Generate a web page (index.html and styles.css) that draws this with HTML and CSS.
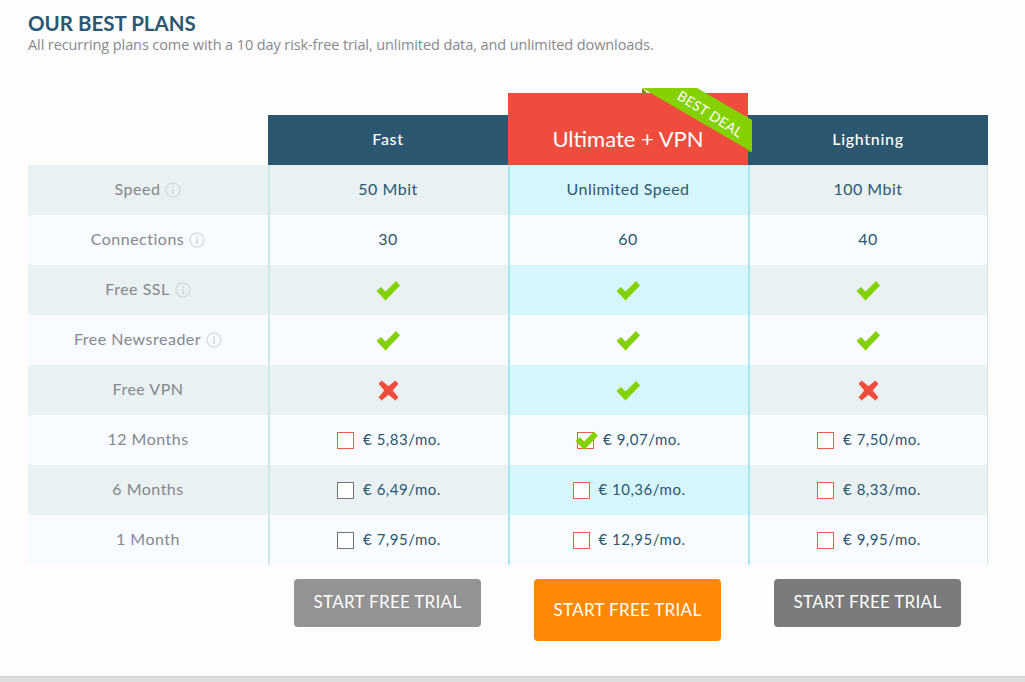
FILE: index.html
```html
<!DOCTYPE html>
<html lang="en">
<head>
<meta charset="utf-8">
<title>Our best plans</title>
<link rel="stylesheet" href="styles.css">
</head>
<body>
<svg class="defs" width="0" height="0" aria-hidden="true">
  <symbol id="check" viewBox="0 0 24 20"><path d="M0.5 10.5 L5 6.5 L9.5 11 L20 0.5 L24 5 L9.5 20 Z" fill="#85d100"/></symbol>
  <symbol id="cross" viewBox="0 0 20 20"><path d="M3.5 0.5 L10 6 L16.5 0.5 L19.5 3.5 L14 10 L19.5 16.5 L16.5 19.5 L10 14 L3.5 19.5 L0.5 16.5 L6 10 L0.5 3.5 Z" fill="#ee4d3d"/></symbol>
  <symbol id="info" viewBox="0 0 16 16"><circle cx="8" cy="8" r="7" fill="none" stroke="#d8dcdc" stroke-width="1.4"/><rect x="7.2" y="7" width="1.6" height="5" fill="#d0d4d4"/><rect x="7.2" y="4.2" width="1.6" height="1.6" fill="#d0d4d4"/></symbol>
</svg>
<main class="page">
  <h1 class="title">OUR BEST PLANS</h1>
  <p class="subtitle">All recurring plans come with a 10 day risk-free trial, unlimited data, and unlimited downloads.</p>
  <div class="plans">
    <div class="head-spacer"></div>
    <div class="head">Fast</div>
    <div class="head head-best">Ultimate + VPN
      <svg class="ribbon" width="112" height="66" viewBox="0 0 112 66" aria-hidden="true">
        <path d="M2 0 L2 5 L7 5 Z" fill="#5f9a00"/>
        <path d="M108 32 L112 32 L112 64 L108 64 Z" fill="#5f9a00"/>
        <path d="M2 0 L57 0 L112 32 L112 64 Z" fill="#85d100"/>
      </svg>
      <span class="ribbon-text">BEST DEAL</span>
    </div>
    <div class="head">Lightning</div>

    <div class="cell label odd">Speed <svg class="info"><use href="#info"/></svg></div>
    <div class="cell odd">50 Mbit</div>
    <div class="cell odd best">Unlimited Speed</div>
    <div class="cell odd last">100 Mbit</div>

    <div class="cell label even">Connections <svg class="info"><use href="#info"/></svg></div>
    <div class="cell even">30</div>
    <div class="cell even best">60</div>
    <div class="cell even last">40</div>

    <div class="cell label odd">Free SSL <svg class="info"><use href="#info"/></svg></div>
    <div class="cell odd"><svg class="check"><use href="#check"/></svg></div>
    <div class="cell odd best"><svg class="check"><use href="#check"/></svg></div>
    <div class="cell odd last"><svg class="check"><use href="#check"/></svg></div>

    <div class="cell label even">Free Newsreader <svg class="info"><use href="#info"/></svg></div>
    <div class="cell even"><svg class="check"><use href="#check"/></svg></div>
    <div class="cell even best"><svg class="check"><use href="#check"/></svg></div>
    <div class="cell even last"><svg class="check"><use href="#check"/></svg></div>

    <div class="cell label odd">Free VPN</div>
    <div class="cell odd"><svg class="cross"><use href="#cross"/></svg></div>
    <div class="cell odd best"><svg class="check"><use href="#check"/></svg></div>
    <div class="cell odd last"><svg class="cross"><use href="#cross"/></svg></div>

    <div class="cell label even">12 Months</div>
    <div class="cell even price"><span class="box"></span>€ 5,83/mo.</div>
    <div class="cell even best price"><span class="box box-on"><svg class="box-check"><use href="#check"/></svg></span>€ 9,07/mo.</div>
    <div class="cell even last price"><span class="box"></span>€ 7,50/mo.</div>

    <div class="cell label odd">6 Months</div>
    <div class="cell odd price"><span class="box box-grey"></span>€ 6,49/mo.</div>
    <div class="cell odd best price"><span class="box"></span>€ 10,36/mo.</div>
    <div class="cell odd last price"><span class="box"></span>€ 8,33/mo.</div>

    <div class="cell label even">1 Month</div>
    <div class="cell even price"><span class="box box-grey"></span>€ 7,95/mo.</div>
    <div class="cell even best price"><span class="box"></span>€ 12,95/mo.</div>
    <div class="cell even last price"><span class="box"></span>€ 9,95/mo.</div>

    <div class="foot-spacer"></div>
    <div class="foot"><a class="btn btn-grey">START FREE TRIAL</a></div>
    <div class="foot"><a class="btn btn-orange">START FREE TRIAL</a></div>
    <div class="foot"><a class="btn btn-dark">START FREE TRIAL</a></div>
  </div>
</main>
<div class="band"></div>
</body>
</html>
```
FILE: styles.css
```css
* { box-sizing: border-box; }
html, body { margin: 0; height: 100%; overflow: hidden; }
body {
  background: #fdfdfd;
  font-family: "Lato", "Liberation Sans", sans-serif;
  color: #2b5770;
  display: flex;
  flex-direction: column;
  height: 682px;
}
.defs { position: absolute; }
.page { flex: 1; padding: 12px 37px 0 28px; }
.title {
  margin: 0;
  font: 700 20.5px/22px "Lato", sans-serif;
  color: #2b5770;
}
.subtitle {
  margin: 0;
  font: 400 14.5px/22px "Open Sans", sans-serif;
  letter-spacing: -0.1px;
  color: #88898d;
}
.plans {
  margin-top: 37px;
  display: grid;
  grid-template-columns: repeat(4, 240px);
  grid-template-rows: 72px repeat(8, 50px) auto;
}
.head {
  align-self: end;
  height: 50px;
  background: #2b5770;
  color: #fff;
  font: 500 16px/48px "Lato", sans-serif;
  letter-spacing: 0.7px;
  text-align: center;
}
.head-best {
  position: relative;
  height: 72px;
  padding-top: 30px;
  background: #ee4d3d;
  font: 400 22px/32px "Lato", sans-serif;
  letter-spacing: 0;
}
.ribbon { position: absolute; left: 132px; top: -5px; }
.ribbon-text {
  position: absolute;
  left: 165px;
  top: 14px;
  transform: rotate(32deg);
  font: 400 14px/14px "Lato", sans-serif;
  letter-spacing: 0.3px;
  color: #fff;
  white-space: nowrap;
}
.cell {
  display: flex;
  align-items: center;
  justify-content: center;
  padding-bottom: 2px;
  font: 400 16px/20px "Lato", sans-serif;
  letter-spacing: 0.5px;
  color: #2b5770;
  box-shadow: inset 2px 0 0 #d2e6e8;
}
.odd { background: #e9f1f2; }
.even { background: #f8fbff; }
.best { box-shadow: inset 2px 0 0 #ace7f0; }
.odd.best { background: #d6f6fe; }
.last { box-shadow: inset 2px 0 0 #ace7f0, inset -1px 0 0 #d2e6e8; }
.label { color: #85888c; box-shadow: none; gap: 5px; }
.info { width: 16px; height: 16px; margin-top: 2px; }
.check { width: 24px; height: 21px; margin-top: 2px; }
.cross { width: 21px; height: 21px; margin-top: 2px; }
.price { gap: 9px; padding-left: 2px; padding-bottom: 2px; font-size: 15px; }
.box {
  position: relative;
  width: 17px;
  height: 17px;
  margin-top: 3px;
  background: #fff;
  border: 1px solid #ee5b4b;
}
.box-grey { border-color: #6f7477; }
.box-on { background: #fff; }
.box-check { position: absolute; left: -3px; top: -2px; width: 23px; height: 19px; }
.foot { display: flex; justify-content: center; align-items: flex-start; padding: 14px 1px 0 0; height: 111px; }
.btn {
  display: block;
  width: 187px;
  height: 48px;
  border-radius: 4px;
  color: #fff;
  font: 400 17px/46px "Lato", sans-serif;
  letter-spacing: 0.3px;
  text-align: center;
}
.btn-grey { background: #939393; }
.btn-dark { background: #7b7b7b; }
.btn-orange { background: #ff8805; height: 62px; line-height: 61px; }
.band { height: 6px; background: #dedede; border-top: 1px solid #d6d6d6; }
```
